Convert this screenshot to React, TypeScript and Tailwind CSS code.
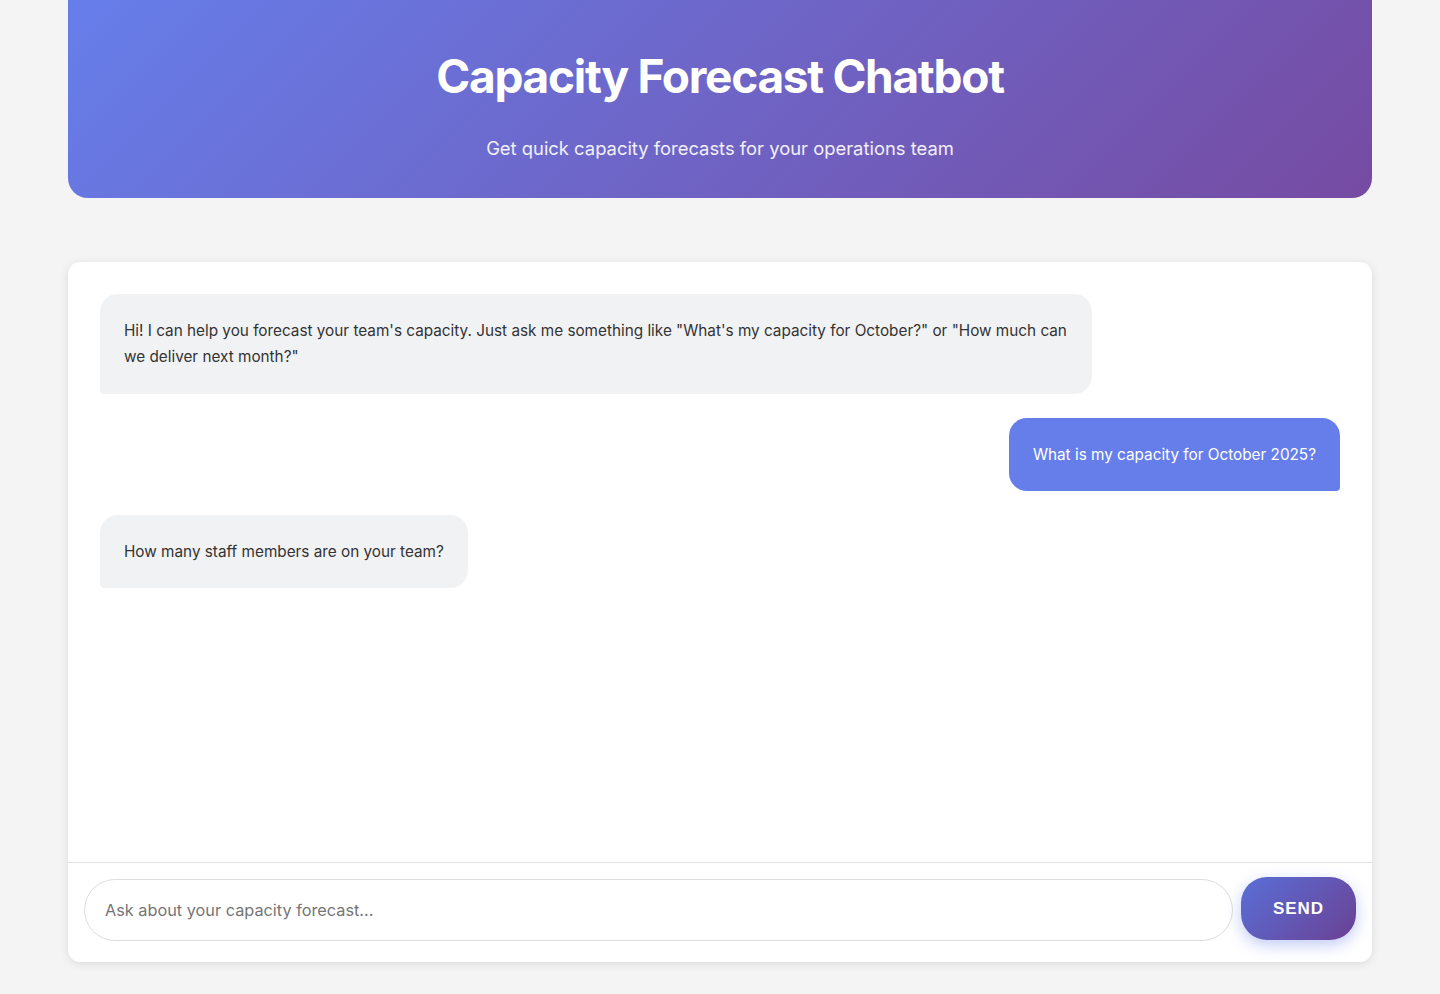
import React from "react";

export default function App() {
  return (
    <div className="min-h-[994px] bg-[#f4f4f4] px-[68px] pb-8" style={{ fontFamily: "Inter, 'Noto Sans', sans-serif" }}>
      <header className="h-[198px] rounded-b-[20px] bg-[linear-gradient(135deg,#667eea_0%,#764ba2_100%)] flex flex-col items-center text-white">
        <h1 className="mt-[47px] text-[46px] leading-[58px] font-bold tracking-[-1.3px]">Capacity Forecast Chatbot</h1>
        <p className="mt-[30px] text-[18.4px] leading-[26px] text-white/90">Get quick capacity forecasts for your operations team</p>
      </header>

      <main className="mt-16 h-[700px] bg-white rounded-xl shadow-[0_2px_10px_rgba(0,0,0,0.1)] flex flex-col overflow-hidden">
        <div className="flex-1 p-8 flex flex-col gap-6">
          <div className="self-start max-w-[80%] bg-[#f1f2f4] text-[#333] rounded-[18px] rounded-bl-[4px] px-6 py-6 text-[15.3px] leading-[26px]">
            Hi! I can help you forecast your team's capacity. Just ask me something like "What's my capacity for October?" or "How much can we deliver next month?"
          </div>
          <div className="self-end max-w-[80%] bg-[#667eea] text-white rounded-[18px] rounded-br-[4px] px-6 py-6 text-[15.3px] leading-[25px]">
            What is my capacity for October 2025?
          </div>
          <div className="self-start max-w-[80%] bg-[#f1f2f4] text-[#333] rounded-[18px] rounded-bl-[4px] px-6 py-6 text-[15.3px] leading-[25px]">
            How many staff members are on your team?
          </div>
        </div>
        <div className="h-[100px] border-t border-[#e0e0e0] px-4 pt-4 flex items-start gap-2">
          <input
            type="text"
            placeholder="Ask about your capacity forecast..."
            className="flex-1 h-[62px] rounded-full border border-[#ddd] px-5 text-[16.3px] text-[#333] placeholder:text-[#757575] outline-none"
          />
          <button
            className="-mt-0.5 w-[115px] h-[63px] rounded-[26px] bg-[linear-gradient(135deg,#5a6fd8_0%,#6a4193_100%)] text-white font-bold text-[17px] tracking-[1px] shadow-[0_5px_15px_rgba(102,126,234,0.4)]"
            style={{ fontFamily: "'Liberation Sans', Arial, sans-serif" }}
          >
            SEND
          </button>
        </div>
      </main>
    </div>
  );
}
